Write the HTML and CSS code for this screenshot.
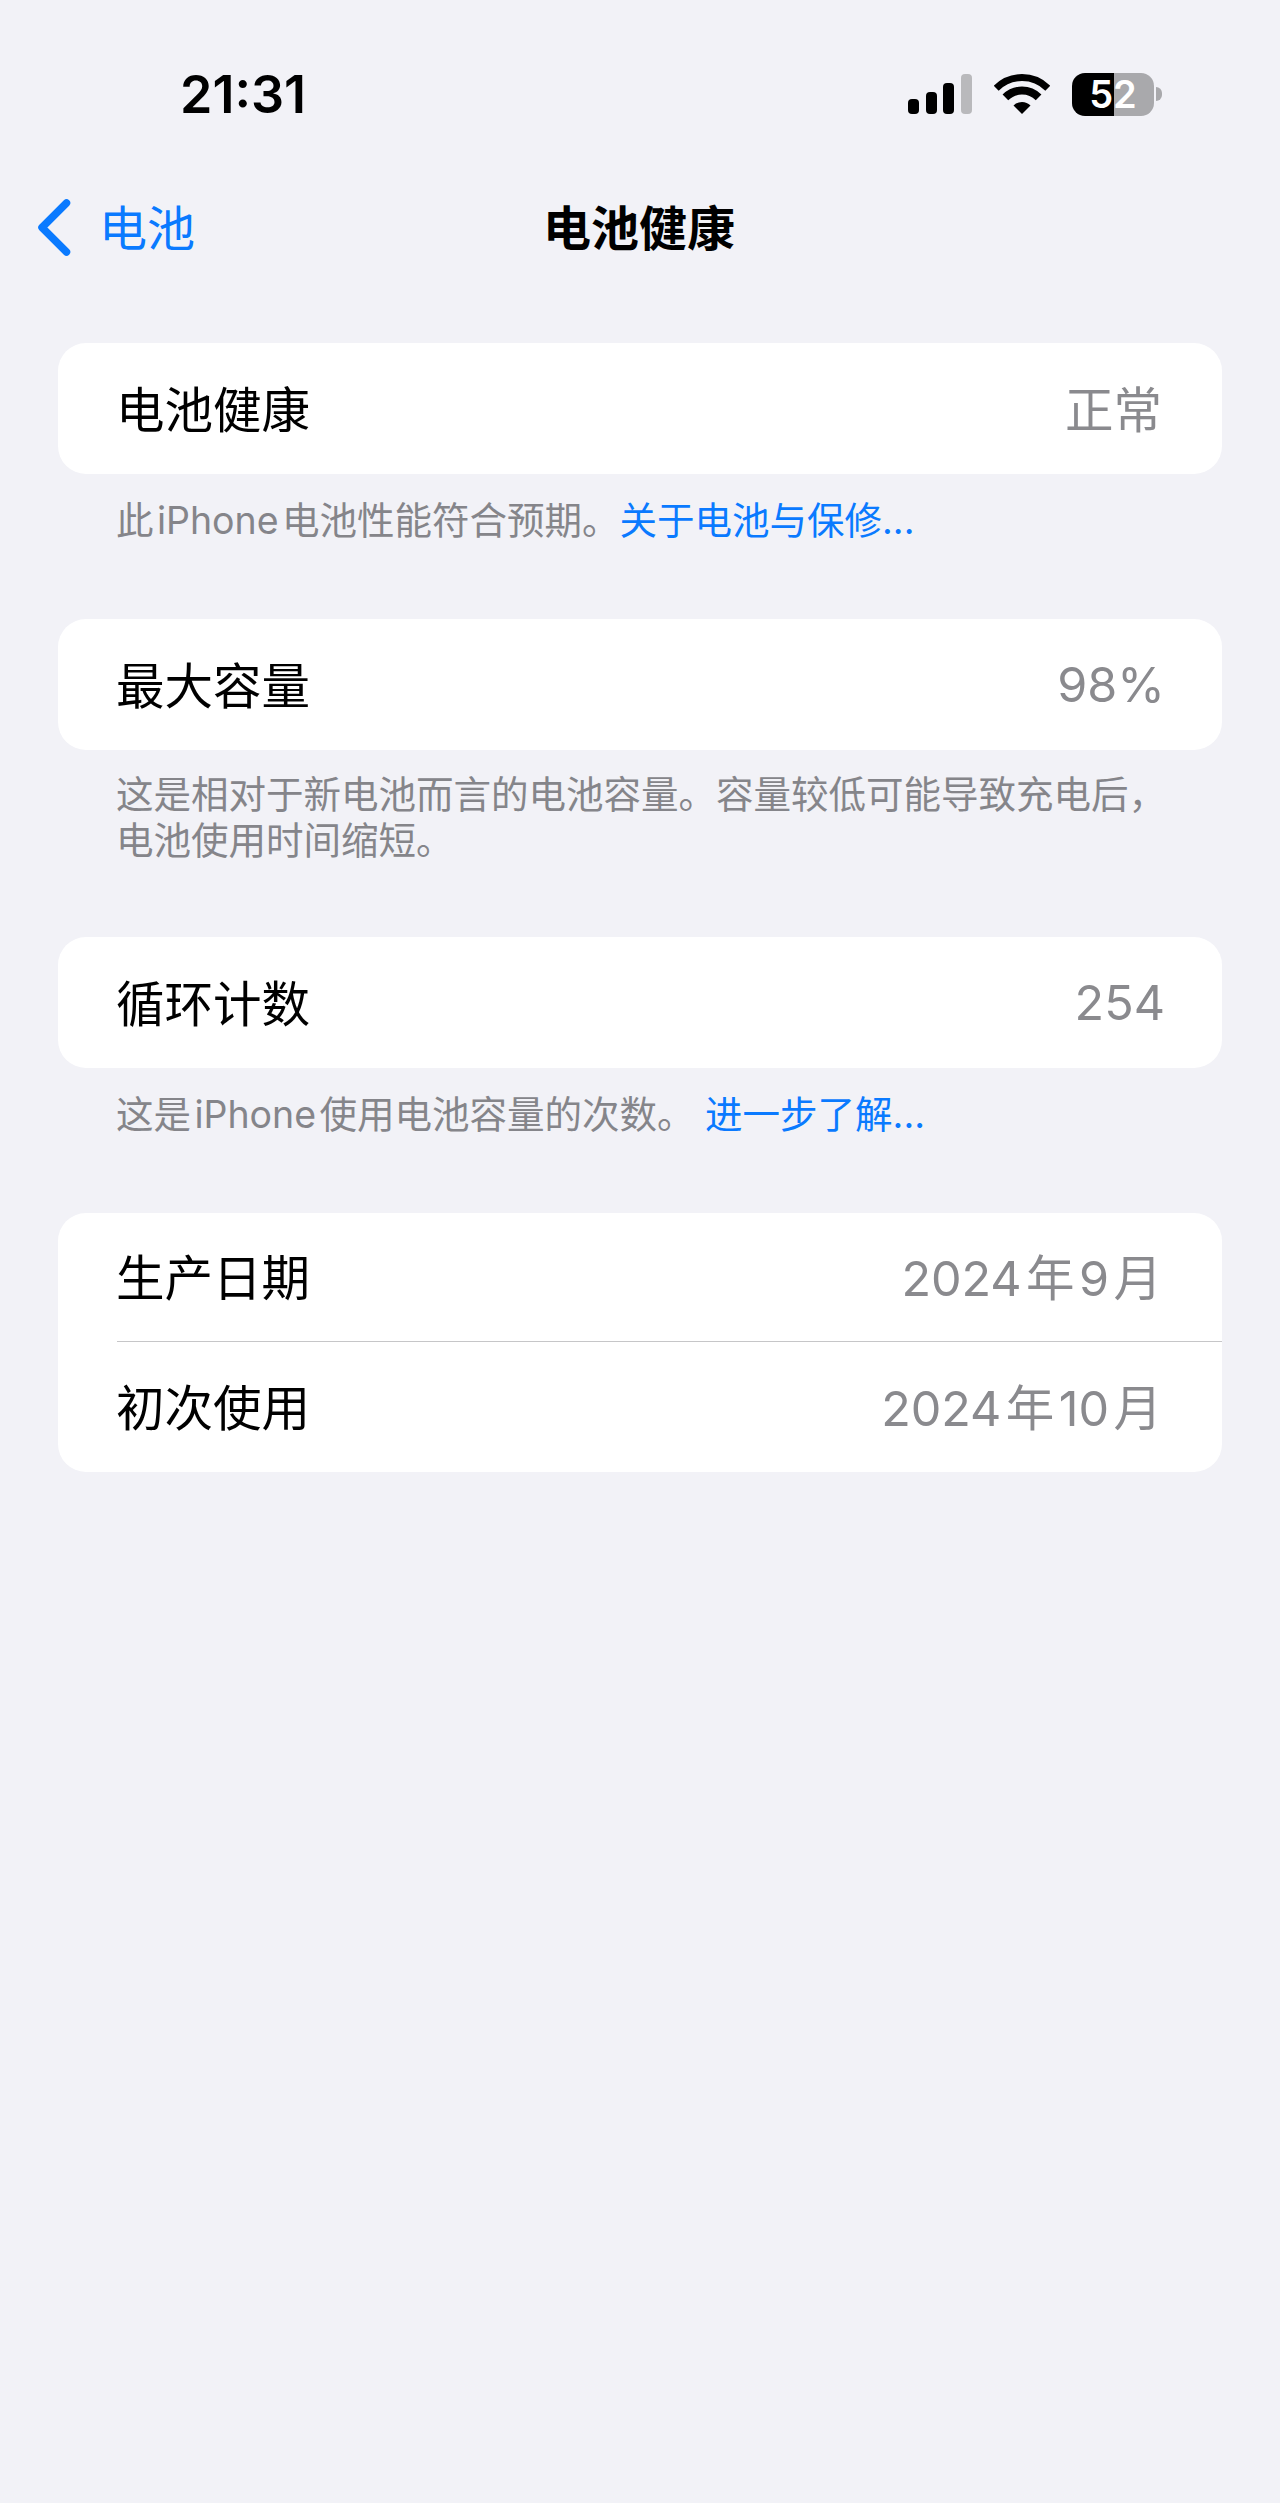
FILE: index.html
```html
<!DOCTYPE html>
<html lang="zh-CN">
<head>
  <meta charset="utf-8">
  <title>电池健康</title>
  <link rel="stylesheet" href="styles.css">
</head>
<body>
  <div class="status-bar">
    <span class="status-time">21:31</span>
    <div class="status-icons">
      <svg class="icon-signal" viewBox="0 0 64 40" width="64" height="40">
        <rect x="0" y="25" width="11" height="15" rx="4" fill="#000"/>
        <rect x="18" y="18" width="11" height="22" rx="4" fill="#000"/>
        <rect x="35" y="9" width="11" height="31" rx="4" fill="#000"/>
        <rect x="53" y="0" width="11" height="40" rx="4" fill="#b9b9bc"/>
      </svg>
      <svg class="icon-wifi" viewBox="0 0 56 40" width="56" height="40">
        <path d="M2.2 14.2A36.5 36.5 0 0 1 53.8 14.2" fill="none" stroke="#000" stroke-width="7"/>
        <path d="M11.4 23.4A23.5 23.5 0 0 1 44.6 23.4" fill="none" stroke="#000" stroke-width="8"/>
        <path d="M28 40L19.5 31.5A12 12 0 0 1 36.5 31.5Z" fill="#000"/>
      </svg>
      <div class="battery">
        <div class="battery-body"><span>52</span></div>
        <div class="battery-cap"></div>
      </div>
    </div>
  </div>

  <div class="nav-bar">
    <div class="nav-back">
      <svg viewBox="0 0 34 57" width="34" height="57">
        <path d="M29.5 4L5 28.500L29.500 53" fill="none" stroke="#0a7aff" stroke-width="7.500" stroke-linecap="round" stroke-linejoin="round"/>
      </svg>
      <span>电池</span>
    </div>
    <div class="nav-title">电池健康</div>
  </div>

  <div class="content">
    <div class="card">
      <div class="row"><span>电池健康</span><span class="row-value">正常</span></div>
    </div>
    <p class="footnote">此&#8202;iPhone&#8202;电池性能符合预期。<span class="link">关于电池与保修...</span></p>

    <div class="card">
      <div class="row"><span>最大容量</span><span class="row-value row-num">98%</span></div>
    </div>
    <p class="footnote tight">这是相对于新电池而言的电池容量。容量较低可能导致充电后，<br>电池使用时间缩短。</p>

    <div class="card">
      <div class="row"><span>循环计数</span><span class="row-value row-num">254</span></div>
    </div>
    <p class="footnote">这是&#8202;iPhone&#8202;使用电池容量的次数。 <span class="link">进一步了解...</span></p>

    <div class="card">
      <div class="row row-short"><span>生产日期</span><span class="row-value">2024&#8202;年&#8202;9&#8202;月</span></div>
      <div class="divider"></div>
      <div class="row row-short"><span>初次使用</span><span class="row-value">2024&#8202;年&#8202;10&#8202;月</span></div>
    </div>
  </div>
</body>
</html>
```

FILE: styles.css
```css
* {
  margin: 0;
  padding: 0;
  box-sizing: border-box;
}

body {
  background: #f2f2f7;
  color: #000;
  font-family: Inter, "Noto Sans CJK SC", sans-serif;
  min-height: 2503px;
}

/* Status bar */
.status-bar {
  display: flex;
  justify-content: space-between;
  align-items: center;
  height: 48px;
  margin-top: 70px;
  padding: 0 118px 0 180px;
}

.status-time {
  padding-top: 2px;
  font-size: 52px;
  font-weight: 600;
  line-height: 48px;
}

.status-icons {
  display: flex;
  align-items: center;
}

.icon-signal {
  display: block;
  margin-right: 22px;
}

.icon-wifi {
  display: block;
  margin-right: 22px;
}

.battery {
  display: flex;
  align-items: center;
}

.battery-body {
  width: 82px;
  height: 43px;
  border-radius: 13px;
  background: linear-gradient(90deg, #000 0, #000 42px, #a9a9ac 42px, #a9a9ac 100%);
  color: #fff;
  font-size: 38px;
  font-weight: 600;
  line-height: 43px;
  text-align: center;
}

.battery-cap {
  width: 6px;
  height: 14px;
  margin-left: 2px;
  border-radius: 0 7px 7px 0;
  background: #a9a9ac;
}

/* Nav bar */
.nav-bar {
  display: grid;
  grid-template-columns: 1fr auto 1fr;
  align-items: center;
  height: 90px;
  margin-top: 64px;
  padding-left: 37px;
}

.nav-back {
  display: flex;
  align-items: center;
  color: #0a7aff;
  font-size: 48px;
}

.nav-back svg {
  display: block;
  margin-right: 28px;
}

.nav-back span {
  margin-bottom: 5px;
}

.nav-title {
  margin-left: -39px;
  margin-bottom: 5px;
  font-size: 48px;
  font-weight: 600;
}

/* Groups */
.content {
  margin-top: 71px;
  padding: 0 58px;
}

.card {
  background: #fff;
  border-radius: 28px;
}

.row {
  display: flex;
  justify-content: space-between;
  align-items: center;
  height: 131px;
  padding: 0 60px 4px 58px;
  font-size: 48.500px;
}

.row-short {
  height: 129px;
  padding-bottom: 6px;
}

.row-value {
  color: #8a8a8e;
}

.row-num {
  margin-top: 4px;
  margin-right: -3px;
}

.divider {
  height: 1px;
  margin-top: -1px;
  margin-bottom: 1px;
  margin-left: 59px;
  background: #c6c6c8;
}

.footnote {
  margin: 24px 0 75px;
  padding: 0 58px;
  color: #85858a;
  font-size: 37.500px;
  line-height: 46px;
  white-space: nowrap;
}

.footnote.tight {
  margin: 22px 0 73px;
}

.link {
  color: #0a7aff;
}
```
